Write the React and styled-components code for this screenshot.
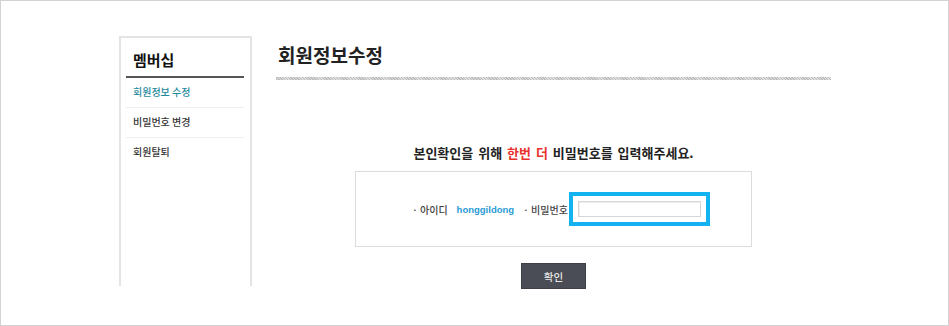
import React from 'react';
import styled, { createGlobalStyle } from 'styled-components';

const GlobalStyle = createGlobalStyle`
  * { box-sizing: border-box; }
  body {
    margin: 0;
    background: #fff;
    font-family: "Noto Sans CJK KR", "Noto Sans", sans-serif;
  }
`;

const Frame = styled.div`
  width: 949px;
  height: 326px;
  border: 1px solid #d3d3d3;
  padding: 35px 0 0 118px;
  display: flex;
  align-items: flex-start;
  overflow: hidden;
`;

const Sidebar = styled.aside`
  width: 133px;
  height: 250px;
  border: 2px solid #e4e4e4;
  border-bottom: none;
  padding: 0 6px 0 5px;
`;

const SideTitle = styled.h2`
  margin: 0;
  height: 40px;
  padding: 12px 0 0 7px;
  font-size: 15px;
  font-weight: 700;
  color: #111;
  line-height: 20px;
  border-bottom: 2px solid #555;
`;

const MenuList = styled.ul`
  list-style: none;
  margin: 0;
  padding: 0;
`;

const MenuItem = styled.li`
  height: 30px;
  line-height: 28px;
  padding-left: 7px;
  font-size: 10px;
  font-weight: 500;
  color: ${({ active }) => (active ? '#1f8a9c' : '#333')};
  border-bottom: 1px solid #efefef;

  &:last-child {
    border-bottom: none;
  }
`;

const Main = styled.main`
  width: 555px;
  margin-left: 24px;
  display: flex;
  flex-direction: column;
  align-items: center;
`;

const PageTitle = styled.h1`
  align-self: stretch;
  margin: 0;
  height: 40px;
  padding: 7px 0 0 2px;
  font-size: 19px;
  line-height: 24px;
  font-weight: 700;
  color: #222;
`;

const Hatch = styled.div`
  align-self: stretch;
  height: 3px;
  margin-top: 1px;
  background: repeating-linear-gradient(45deg, #bdbdbd 0 1px, #dedede 1px 2px);
`;

const Notice = styled.p`
  margin: 63px 0 0;
  height: 20px;
  line-height: 20px;
  font-size: 13px;
  font-weight: 700;
  color: #222;
  word-spacing: 2px;
`;

const Accent = styled.span`
  color: #e9322d;
`;

const CheckBox = styled.div`
  margin-top: 8px;
  width: 397px;
  height: 76px;
  border: 1px solid #dcdcdc;
  display: flex;
  align-items: center;
  padding-left: 56px;
`;

const Label = styled.span`
  font-size: 10px;
  font-weight: 500;
  color: #444;
  margin-right: ${({ gap }) => gap}px;
`;

const UserId = styled.span`
  font-family: "Liberation Sans", Arial, sans-serif;
  font-size: 9.5px;
  font-weight: 700;
  color: #2a9bd5;
  margin-right: 9px;
`;

const Highlight = styled.div`
  margin-left: 1px;
  border: 4px solid #12b3f0;
  padding: 5px;
`;

const PasswordInput = styled.input`
  display: block;
  width: 123px;
  height: 16px;
  border: 1px solid #d6d6d6;
  box-shadow: inset 1px 1px 0 #efefef;
  padding: 0 4px;
  outline: none;
`;

const SubmitButton = styled.button`
  margin-top: 16px;
  width: 65px;
  height: 26px;
  border: 1px solid #3d4047;
  background: #4a4d55;
  color: #e8e8e8;
  font-family: "Noto Sans CJK KR", sans-serif;
  font-size: 10.5px;
  font-weight: 500;
  padding: 0;
`;

export default function App() {
  return (
    <>
      <GlobalStyle />
      <Frame>
        <Sidebar>
          <SideTitle>멤버십</SideTitle>
          <MenuList>
            <MenuItem active>회원정보 수정</MenuItem>
            <MenuItem>비밀번호 변경</MenuItem>
            <MenuItem>회원탈퇴</MenuItem>
          </MenuList>
        </Sidebar>
        <Main>
          <PageTitle>회원정보수정</PageTitle>
          <Hatch />
          <Notice>
            본인확인을 위해 <Accent>한번 더</Accent> 비밀번호를 입력해주세요.
          </Notice>
          <CheckBox>
            <Label gap={9}>· 아이디</Label>
            <UserId>honggildong</UserId>
            <Label gap={0}>· 비밀번호</Label>
            <Highlight>
              <PasswordInput type="password" />
            </Highlight>
          </CheckBox>
          <SubmitButton>확인</SubmitButton>
        </Main>
      </Frame>
    </>
  );
}
